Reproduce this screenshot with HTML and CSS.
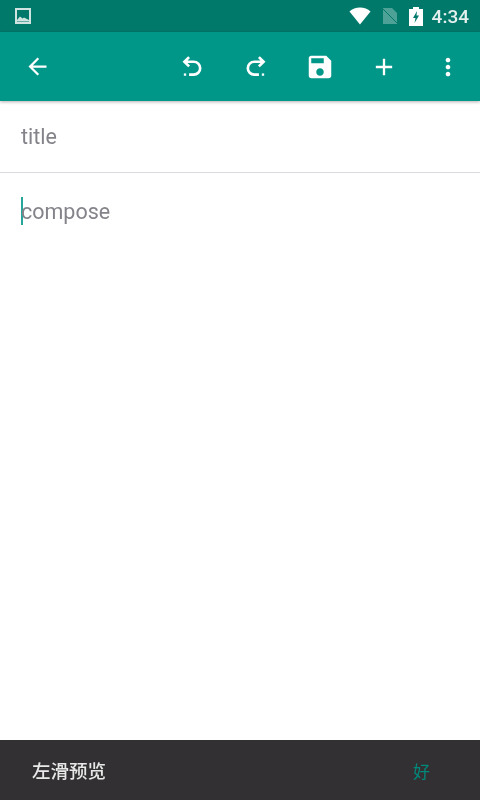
FILE: index.html
```html
<!doctype html>
<html lang="zh">
    <head>
        <title>Editor</title>
        <meta name="viewport" content="width=device-width, initial-scale=1"/>
        <link rel="stylesheet" href="styles.css">
    </head>
    <body>
        <div class="screen">
            <div class="status">
                <svg class="status__pic" width="18" height="18" viewBox="0 0 18 18">
                    <path fill="#cfe4e1" d="M1 1h16v16H1z"/>
                    <path fill="#00796b" d="M3 3h12v12H3z"/>
                    <path fill="#cfe4e1" d="M3 13l3-3.500 2.500 2 1.500-1 5 2.500v1.500H3z"/>
                </svg>
                <div class="status__right">
                    <svg class="status__wifi" width="22" height="18" viewBox="0 0 24 18" preserveAspectRatio="none">
                        <path fill="#fff" d="M0.500 4.500C3.500 2 7.500 0.500 12 0.500s8.500 1.500 11.500 4L12 17.500z"/>
                    </svg>
                    <svg class="status__sim" width="16" height="18" viewBox="0 0 16 18">
                        <path fill="#fff" fill-opacity=".3" d="M1 1h9l5 5v11H1z"/>
                        <path stroke="#00796b" stroke-width="1" d="M0 1l16 16"/>
                    </svg>
                    <svg class="status__batt" width="14" height="19" viewBox="0 0 14 19">
                        <path fill="#fff" d="M4 0h6v2h4v17H0V2h4z"/>
                        <path fill="#00796b" d="M8 4L4 11h2.500L5.500 16 10 8.500H7.500z"/>
                    </svg>
                    <span class="status__time">4:34</span>
                </div>
            </div>
            <div class="toolbar">
                <button class="toolbar__btn">
                    <svg width="27" height="27" viewBox="0 0 24 24"><path fill="#fff" d="M20 11H7.830l5.590-5.590L12 4l-8 8 8 8 1.410-1.410L7.830 13H20v-2z"/></svg>
                </button>
                <div class="toolbar__actions">
                    <button class="toolbar__btn">
                        <svg width="28" height="28" viewBox="0 0 24 24">
                            <path fill="none" stroke="#fff" stroke-width="2.300" d="M9.500 3.500L5.500 7.500l4 4M5.500 7.500h8a5 5 0 0 1 0 11h-4"/>
                            <path fill="#fff" d="M5 17.500h2v2H5z"/>
                        </svg>
                    </button>
                    <button class="toolbar__btn">
                        <svg width="28" height="28" viewBox="0 0 24 24">
                            <path fill="none" stroke="#fff" stroke-width="2.300" d="M14.500 3.500l4 4-4 4M18.500 7.500h-8a5 5 0 0 0 0 11h4"/>
                            <path fill="#fff" d="M17 17.500h2v2h-2z"/>
                        </svg>
                    </button>
                    <button class="toolbar__btn">
                        <svg width="30" height="30" viewBox="0 0 24 24"><path fill="#fff" d="M17 3H5c-1.110 0-2 .9-2 2v14c0 1.100.89 2 2 2h14c1.100 0 2-.9 2-2V7l-4-4zm-5 16c-1.660 0-3-1.340-3-3s1.340-3 3-3 3 1.340 3 3-1.340 3-3 3zm3-10H5V5h10v4z"/></svg>
                    </button>
                    <button class="toolbar__btn">
                        <svg width="28" height="28" viewBox="0 0 24 24"><path fill="#fff" d="M19 13h-6v6h-2v-6H5v-2h6V5h2v6h6v2z"/></svg>
                    </button>
                    <button class="toolbar__btn">
                        <svg width="28" height="28" viewBox="0 0 24 24"><path fill="#fff" d="M12 8c1.100 0 2-.9 2-2s-.9-2-2-2-2 .9-2 2 .9 2 2 2zm0 2c-1.100 0-2 .9-2 2s.9 2 2 2 2-.9 2-2-.9-2-2-2zm0 6c-1.100 0-2 .9-2 2s.9 2 2 2 2-.9 2-2-.9-2-2-2z"/></svg>
                    </button>
                </div>
            </div>
            <div class="title">title</div>
            <div class="compose">
                <span class="compose__caret"></span>
                <span>compose</span>
            </div>
            <div class="snackbar">
                <span class="snackbar__text">左滑预览</span>
                <span class="snackbar__action">好</span>
            </div>
        </div>
    </body>
</html>
```

FILE: styles.css
```css
html, body {
    margin: 0;
    height: 100%;
}
body {
    background-color: #fff;
    font-family: Roboto, "Noto Sans CJK SC", sans-serif;
}
.screen {
    display: flex;
    flex-direction: column;
    height: 800px;
    overflow: hidden;
    filter: blur(.4px);
}
.status {
    display: flex;
    align-items: center;
    justify-content: space-between;
    flex: none;
    height: 32px;
    padding: 0 11px 0 14px;
    background-color: #00796b;
}
.status__right {
    display: flex;
    align-items: center;
}
.status__pic,
.status__wifi,
.status__sim,
.status__batt {
    display: block;
}
.status__sim {
    margin-left: 11px;
}
.status__batt {
    margin-left: 11px;
}
.status__time {
    margin-left: 9px;
    color: #e4f0ee;
    font-size: 19px;
    font-weight: 500;
}
.toolbar {
    display: flex;
    align-items: center;
    justify-content: space-between;
    flex: none;
    height: 69px;
    padding-left: 5px;
    background-color: #009688;
    box-shadow: 0 1px 3px rgba(0, 0, 0, .3);
}
.toolbar__actions {
    display: flex;
}
.toolbar__btn {
    display: flex;
    align-items: center;
    justify-content: center;
    width: 64px;
    height: 69px;
    padding: 0;
    border: 0;
    background: none;
}
.title {
    flex: none;
    height: 71px;
    line-height: 71px;
    padding-left: 21px;
    border-bottom: 1px solid #dcd9e0;
    color: #85838a;
    font-size: 21.500px;
}
.compose {
    display: flex;
    align-items: center;
    flex: none;
    height: 76px;
    padding-left: 21px;
    color: #85838a;
    font-size: 21.500px;
}
.compose__caret {
    width: 2px;
    height: 28px;
    margin-right: -2px;
    background-color: #26a69a;
}
.snackbar {
    display: flex;
    align-items: center;
    justify-content: space-between;
    flex: none;
    height: 60px;
    margin-top: auto;
    padding: 0 50px 0 32px;
    background-color: #323032;
    color: #e8e8e8;
    font-size: 17px;
}
.snackbar__text {
    font-size: 18.500px;
    font-weight: 500;
}
.snackbar__action {
    color: #00897b;
}
```
